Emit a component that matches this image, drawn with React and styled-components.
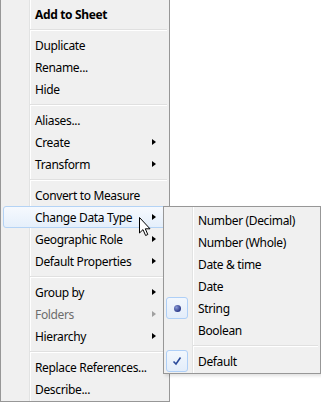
import React from 'react';
import styled, { createGlobalStyle } from 'styled-components';

const GlobalStyle = createGlobalStyle`
  html, body {
    margin: 0;
    padding: 0;
    background: #ffffff;
  }
  body {
    font-family: "Noto Sans", "Open Sans", sans-serif;
    font-size: 12px;
    letter-spacing: -0.35px;
  }
`;

const mainItems = [
  { label: 'Add to Sheet', bold: true },
  'sep',
  { label: 'Duplicate' },
  { label: 'Rename...' },
  { label: 'Hide' },
  'sep',
  { label: 'Aliases...' },
  { label: 'Create', sub: true },
  { label: 'Transform', sub: true },
  'sep',
  { label: 'Convert to Measure' },
  { label: 'Change Data Type', sub: true, active: true },
  { label: 'Geographic Role', sub: true },
  { label: 'Default Properties', sub: true },
  'sep',
  { label: 'Group by', sub: true },
  { label: 'Folders', sub: true, disabled: true },
  { label: 'Hierarchy', sub: true },
  'sep',
  { label: 'Replace References...' },
  { label: 'Describe...' },
];

const typeItems = [
  { label: 'Number (Decimal)' },
  { label: 'Number (Whole)' },
  { label: 'Date & time' },
  { label: 'Date' },
  { label: 'String', mark: 'radio' },
  { label: 'Boolean' },
  'sep',
  { label: 'Default', mark: 'check' },
];

const Stage = styled.div`
  position: relative;
  width: 321px;
  height: 402px;
  overflow: hidden;
`;

const Menu = styled.div`
  box-sizing: border-box;
  width: ${(p) => p.$width}px;
  border: 1px solid #979797;
  border-top: ${(p) => (p.$open ? 'none' : '1px solid #979797')};
  padding: ${(p) => (p.$open ? '3px' : '2px')} 2px 1px 2px;
  background:
    linear-gradient(
      to right,
      transparent 28px,
      #e2e3e3 28px,
      #e2e3e3 29px,
      #ffffff 29px,
      #ffffff 30px,
      transparent 30px
    ),
    #f0f0f0;
  color: #000000;
  display: flex;
  flex-direction: column;
`;

const SubMenu = styled(Menu)`
  position: absolute;
  left: 163px;
  top: 206px;
  box-shadow: 2px 2px 3px rgba(0, 0, 0, 0.12);
`;

const Item = styled.div`
  position: relative;
  box-sizing: border-box;
  height: 22px;
  display: flex;
  align-items: center;
  padding: 0 10px 0 31px;
  border: 1px solid ${(p) => (p.$active ? '#b4d3f5' : 'transparent')};
  border-radius: 3px;
  background: ${(p) =>
    p.$active ? 'linear-gradient(#f6f9fe, #e5effb)' : 'transparent'};
  color: ${(p) => (p.$disabled ? '#6d6d6d' : '#000000')};
  font-weight: ${(p) => (p.$bold ? 700 : 400)};
  white-space: nowrap;
`;

const Label = styled.span`
  flex: 1;
`;

const Arrow = styled.span`
  width: 0;
  height: 0;
  border-left: 4px solid ${(p) => (p.$disabled ? '#a0a0a0' : '#000000')};
  border-top: 3.5px solid transparent;
  border-bottom: 3.5px solid transparent;
`;

const Separator = styled.div`
  height: 9px;
  display: flex;
  align-items: center;
  padding-left: 27px;

  &::before {
    content: '';
    flex: 1;
    height: 1px;
    border-bottom: 1px solid #ffffff;
    background: #e0e0e0;
  }
`;

const MarkBox = styled.span`
  position: absolute;
  left: -1px;
  top: -1px;
  box-sizing: border-box;
  width: 22px;
  height: 22px;
  border: 1px solid #aecff7;
  border-radius: 3px;
  background: linear-gradient(#f2f7fd, #e3edfa);
  display: flex;
  align-items: center;
  justify-content: center;
`;

const Bullet = styled.span`
  width: 7px;
  height: 7px;
  border-radius: 50%;
  background: radial-gradient(circle at 35% 35%, #8a9ad8, #2c3a8a 70%);
`;

const Cursor = styled.svg`
  position: absolute;
  left: 139px;
  top: 217px;
  pointer-events: none;
`;

const renderItems = (items) =>
  items.map((it, i) => {
    if (it === 'sep') return <Separator key={i} />;
    return (
      <Item key={i} $active={it.active} $disabled={it.disabled} $bold={it.bold}>
        {it.mark && (
          <MarkBox>
            {it.mark === 'radio' ? (
              <Bullet />
            ) : (
              <svg width="10" height="10" viewBox="0 0 10 10">
                <path
                  d="M1.5 5.5 L4 8 L8.5 1.5"
                  fill="none"
                  stroke="#2a4a9a"
                  strokeWidth="1.6"
                />
              </svg>
            )}
          </MarkBox>
        )}
        <Label>{it.label}</Label>
        {it.sub && <Arrow $disabled={it.disabled} />}
      </Item>
    );
  });

const App = () => (
  <Stage>
    <GlobalStyle />
    <Menu $width={170} $open>
      {renderItems(mainItems)}
    </Menu>
    <SubMenu $width={158}>{renderItems(typeItems)}</SubMenu>
    <Cursor width="13" height="20" viewBox="0 0 13 20">
      <path
        d="M0.5 0.5 L0.5 16 L4 12.6 L6.6 18.5 L8.8 17.5 L6.3 11.8 L11 11.8 Z"
        fill="#ffffff"
        stroke="#000000"
        strokeWidth="1"
        strokeLinejoin="miter"
      />
    </Cursor>
  </Stage>
);

export default App;
